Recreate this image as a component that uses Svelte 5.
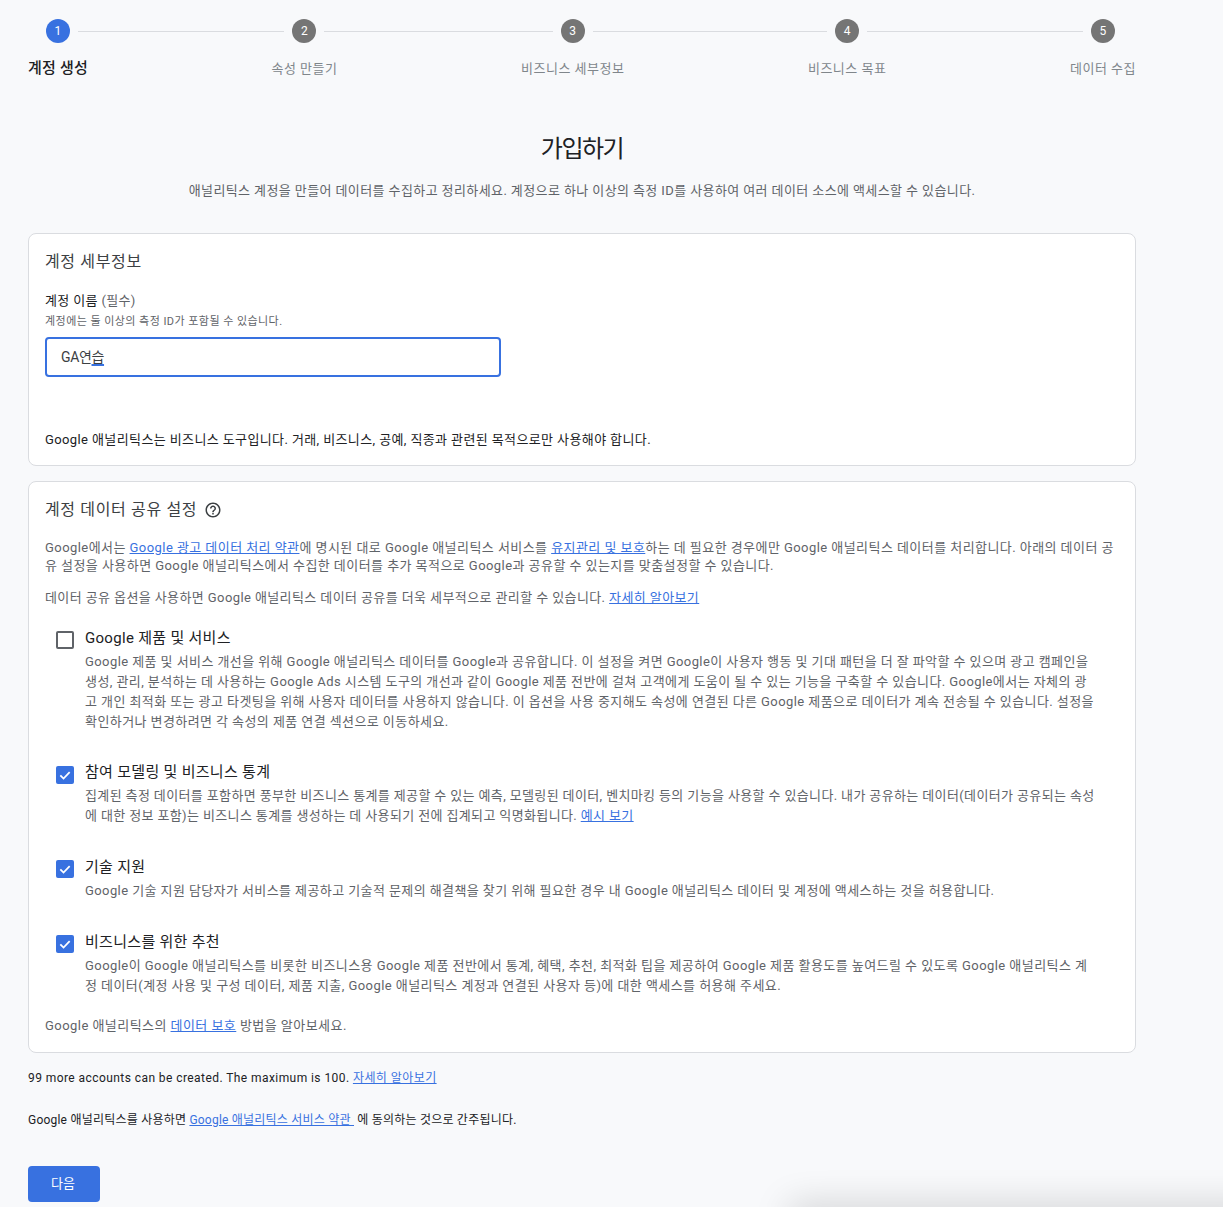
<script>
  const steps = [
    { n: 1, label: '계정 생성', active: true },
    { n: 2, label: '속성 만들기' },
    { n: 3, label: '비즈니스 세부정보' },
    { n: 4, label: '비즈니스 목표' },
    { n: 5, label: '데이터 수집' }
  ];
</script>

<div class="page">
  <div class="stepper">
    {#each steps as s, i}
      <div class="head">
        <span class="line" class:off={i === 0}></span>
        <span class="dot" class:on={s.active}>{s.n}</span>
        <span class="line" class:off={i === steps.length - 1}></span>
      </div>
      {#if i < steps.length - 1}<div class="fill"><span class="line"></span></div>{/if}
    {/each}
    {#each steps as s, i}
      <div class="lab" class:on={s.active}>{s.label}</div>
      {#if i < steps.length - 1}<div></div>{/if}
    {/each}
  </div>

  <h1>가입하기</h1>
  <p class="intro">애널리틱스 계정을 만들어 데이터를 수집하고 정리하세요. 계정으로 하나 이상의 측정 ID를 사용하여 여러 데이터 소스에 액세스할 수 있습니다.</p>

  <section class="card first">
    <h2>계정 세부정보</h2>
    <div class="flabel">계정 이름 <span>(필수)</span></div>
    <div class="fhint">계정에는 둘 이상의 측정 ID가 포함될 수 있습니다.</div>
    <div class="input">GA연<u>습</u></div>
    <p class="biz">Google 애널리틱스는 비즈니스 도구입니다. 거래, 비즈니스, 공예, 직종과 관련된 목적으로만 사용해야 합니다.</p>
  </section>

  <section class="card second">
    <h2 class="help">계정 데이터 공유 설정
      <svg width="18" height="18" viewBox="0 0 24 24" fill="#3c4043"><path d="M11 18h2v-2h-2v2zm1-16C6.48 2 2 6.48 2 12s4.48 10 10 10 10-4.48 10-10S17.52 2 12 2zm0 18c-4.41 0-8-3.59-8-8s3.59-8 8-8 8 3.59 8 8-3.59 8-8 8zm0-14c-2.21 0-4 1.79-4 4h2c0-1.1.9-2 2-2s2 .9 2 2c0 2-3 1.75-3 5h2c0-2.25 3-2.5 3-5 0-2.21-1.79-4-4-4z"/></svg>
    </h2>
    <p class="para one">Google에서는 <a href="#a">Google 광고 데이터 처리 약관</a>에 명시된 대로 Google 애널리틱스 서비스를 <a href="#a">유지관리 및 보호</a>하는 데 필요한 경우에만 Google 애널리틱스 데이터를 처리합니다. 아래의 데이터 공<br>유 설정을 사용하면 Google 애널리틱스에서 수집한 데이터를 추가 목적으로 Google과 공유할 수 있는지를 맞춤설정할 수 있습니다.</p>
    <p class="para two">데이터 공유 옵션을 사용하면 Google 애널리틱스 데이터 공유를 더욱 세부적으로 관리할 수 있습니다. <a href="#a">자세히 알아보기</a></p>

    <div class="opt o1">
      <span class="box"></span>
      <div>
        <div class="otitle">Google 제품 및 서비스</div>
        <div class="odesc">Google 제품 및 서비스 개선을 위해 Google 애널리틱스 데이터를 Google과 공유합니다. 이 설정을 켜면 Google이 사용자 행동 및 기대 패턴을 더 잘 파악할 수 있으며 광고 캠페인을<br>생성, 관리, 분석하는 데 사용하는 Google Ads 시스템 도구의 개선과 같이 Google 제품 전반에 걸쳐 고객에게 도움이 될 수 있는 기능을 구축할 수 있습니다. Google에서는 자체의 광<br>고 개인 최적화 또는 광고 타겟팅을 위해 사용자 데이터를 사용하지 않습니다. 이 옵션을 사용 중지해도 속성에 연결된 다른 Google 제품으로 데이터가 계속 전송될 수 있습니다. 설정을<br>확인하거나 변경하려면 각 속성의 제품 연결 섹션으로 이동하세요.</div>
      </div>
    </div>
    <div class="opt o2">
      <span class="box on"><svg width="14" height="14" viewBox="0 0 24 24"><path d="M4 12.5l5.5 5.5L20 7" fill="none" stroke="#fff" stroke-width="3"/></svg></span>
      <div>
        <div class="otitle">참여 모델링 및 비즈니스 통계</div>
        <div class="odesc">집계된 측정 데이터를 포함하면 풍부한 비즈니스 통계를 제공할 수 있는 예측, 모델링된 데이터, 벤치마킹 등의 기능을 사용할 수 있습니다. 내가 공유하는 데이터(데이터가 공유되는 속성<br>에 대한 정보 포함)는 비즈니스 통계를 생성하는 데 사용되기 전에 집계되고 익명화됩니다. <a href="#a">예시 보기</a></div>
      </div>
    </div>
    <div class="opt o3">
      <span class="box on"><svg width="14" height="14" viewBox="0 0 24 24"><path d="M4 12.5l5.5 5.5L20 7" fill="none" stroke="#fff" stroke-width="3"/></svg></span>
      <div>
        <div class="otitle">기술 지원</div>
        <div class="odesc">Google 기술 지원 담당자가 서비스를 제공하고 기술적 문제의 해결책을 찾기 위해 필요한 경우 내 Google 애널리틱스 데이터 및 계정에 액세스하는 것을 허용합니다.</div>
      </div>
    </div>
    <div class="opt o4">
      <span class="box on"><svg width="14" height="14" viewBox="0 0 24 24"><path d="M4 12.5l5.5 5.5L20 7" fill="none" stroke="#fff" stroke-width="3"/></svg></span>
      <div>
        <div class="otitle">비즈니스를 위한 추천</div>
        <div class="odesc">Google이 Google 애널리틱스를 비롯한 비즈니스용 Google 제품 전반에서 통계, 혜택, 추천, 최적화 팁을 제공하여 Google 제품 활용도를 높여드릴 수 있도록 Google 애널리틱스 계<br>정 데이터(계정 사용 및 구성 데이터, 제품 지출, Google 애널리틱스 계정과 연결된 사용자 등)에 대한 액세스를 허용해 주세요.</div>
      </div>
    </div>
    <p class="para prot">Google 애널리틱스의 <a href="#a">데이터 보호</a> 방법을 알아보세요.</p>
  </section>

  <p class="note n1">99 more accounts can be created. The maximum is 100. <a href="#a">자세히 알아보기</a></p>
  <p class="note n2">Google 애널리틱스를 사용하면 <a href="#a">Google 애널리틱스 서비스 약관&nbsp;</a> 에 동의하는 것으로 간주됩니다.</p>
  <button>다음</button>
</div>
<div class="edge"></div>

<style>
  :global(body) { background: #f8f9fb; overflow: hidden; height: 1207px; }
  .page {
    width: 1108px; margin-left: 28px; height: 1207px; box-sizing: border-box; padding-top: 19px;
    font-family: Roboto, "Noto Sans CJK KR", sans-serif; color: #202124; font-size: 13px;
    letter-spacing: 0.4px; overflow: hidden;
  }
  .stepper { display: grid; grid-template-columns: auto 1fr auto 1fr auto 1fr auto 1fr auto; }
  .head { display: flex; align-items: center; gap: 8px; height: 24px; }
  .fill { display: flex; align-items: center; }
  .line { flex: 1; height: 1px; background: #dadce0; }
  .line.off { background: none; }
  .dot { width: 24px; height: 24px; border-radius: 50%; background: #757575; color: #fff; font-size: 12px; display: flex; align-items: center; justify-content: center; letter-spacing: 0; }
  .dot.on { background: #3871e0; }
  .lab { margin-top: 16px; line-height: 20px; color: #80868b; text-align: center; font-size: 13px; letter-spacing: 0.5px; white-space: nowrap; }
  .lab.on { color: #202124; font-size: 15px; font-weight: 500; margin-top: 15px; letter-spacing: 0.2px; }
  h1 { font-size: 24px; font-weight: 400; line-height: 32px; text-align: center; margin: 54px 0 0; letter-spacing: -1.5px; }
  .intro { margin: 16px 0 0; text-align: center; line-height: 20px; color: #5f6368; letter-spacing: 0.4px; }
  .card { background: #fff; border: 1px solid #dadce0; border-radius: 8px; box-sizing: border-box; padding: 0 16px; }
  .first { margin-top: 32px; height: 233px; }
  .second { margin-top: 15px; height: 572px; }
  h2 { font-size: 16px; font-weight: 400; line-height: 24px; margin: 16px 0 0; color: #3c4043; display: flex; align-items: center; gap: 7px; letter-spacing: 0.65px; }
  .flabel { margin-top: 17px; line-height: 20px; color: #202124; letter-spacing: 0.35px; }
  .flabel span { color: #5f6368; }
  .fhint { font-size: 11px; line-height: 16px; color: #5f6368; margin-top: 3px; letter-spacing: 0.45px; }
  .input { width: 456px; height: 40px; box-sizing: border-box; border: 2px solid #3871e0; border-radius: 4px; margin-top: 7px; padding-left: 14px; font-size: 14px; line-height: 36px; color: #3c4043; letter-spacing: -0.35px; }
  .input u { text-decoration-color: #3871e0; text-decoration-thickness: 2px; text-underline-offset: 2px; }
  .biz { margin: 53px 0 0; line-height: 20px; color: #202124; letter-spacing: 0.39px; }
  .para { margin: 0; line-height: 18px; color: #5f6368; white-space: nowrap; }
  .one { margin-top: 17px; letter-spacing: 0.44px; }
  .two { margin-top: 14px; }
  .prot { margin-top: 21px; letter-spacing: 0.45px; }
  a { color: #3871e0; }
  .opt { display: flex; gap: 11px; padding-left: 11px; white-space: nowrap; }
  .o1 { margin-top: 21px; }
  .o2 { margin-top: 30px; }
  .o3 { margin-top: 31px; }
  .o4 { margin-top: 31px; }
  .box { width: 18px; height: 18px; box-sizing: border-box; border: 2px solid #5f6368; border-radius: 2px; flex: none; margin-top: 3px; display: flex; align-items: center; justify-content: center; }
  .box.on { background: #3871e0; border: none; }
  .o2 .box { margin-top: 4px; }
  .otitle { font-size: 15px; line-height: 20px; color: #202124; letter-spacing: 0.3px; }
  .odesc { line-height: 20px; color: #5f6368; margin-top: 4px; }
  .o1 .odesc { letter-spacing: 0.42px; }
  .o2 .odesc { letter-spacing: 0.37px; }
  .o3 .odesc { letter-spacing: 0.41px; }
  .o4 .odesc { letter-spacing: 0.44px; }
  .note { margin: 0; line-height: 18px; font-size: 12px; color: #202124; letter-spacing: 0.43px; }
  .n1 { margin-top: 16px; }
  .n2 { margin-top: 24px; letter-spacing: 0.22px; }
  button { display: block; width: 72px; height: 36px; margin-top: 37px; padding: 0 2px 3px 0; background: #3871e0; color: #fff; border: none; border-radius: 4px; font: inherit; letter-spacing: 0; }
  .edge { position: fixed; left: 790px; right: -40px; top: 1207px; height: 20px; box-shadow: 0 0 36px rgba(0,0,0,.22); }
</style>
